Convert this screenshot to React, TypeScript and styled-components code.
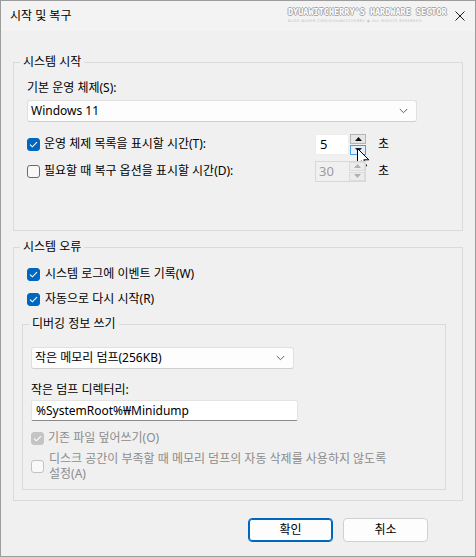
import React from "react";
import styled, { createGlobalStyle } from "styled-components";

const GlobalStyle = createGlobalStyle`
  html, body { margin: 0; padding: 0; background: #f0f0f0; }
  body {
    font-family: "Noto Sans", "Noto Sans CJK KR", sans-serif;
    font-size: 12px;
    color: #000;
  }
  * { box-sizing: border-box; }
`;

const Window = styled.div`
  width: 476px;
  height: 557px;
  border: 1px solid #9c9c9c;
  background: #f0f0f0;
  display: flex;
  flex-direction: column;
  overflow: hidden;
`;

const TitleBar = styled.div`
  height: 30px;
  flex-shrink: 0;
  background: #f3f3f3;
  display: flex;
  align-items: center;
  padding: 0 10px 0 9px;
`;

const Title = styled.div`
  font-size: 12px;
  line-height: 16px;
  color: #000;
`;

const Watermark = styled.div`
  margin-left: auto;
  margin-right: 9px;
  width: 158px;
  display: flex;
  flex-direction: column;
  align-items: stretch;
  margin-top: -2px;
`;

const WatermarkMain = styled.div`
  font-family: "DejaVu Sans Mono", monospace;
  font-weight: bold;
  font-size: 8.5px;
  line-height: 9px;
  color: #ffffff;
  white-space: nowrap;
  text-shadow: 1px 0 0 #a9a9a9, -1px 0 0 #a9a9a9, 0 1px 0 #a9a9a9, 0 -1px 0 #a9a9a9;
`;

const WatermarkSub = styled.div`
  margin-top: 2px;
  font-family: "DejaVu Sans", sans-serif;
  font-size: 3.6px;
  line-height: 4px;
  letter-spacing: 0.45px;
  color: #bdbdbd;
  white-space: nowrap;
`;

const CloseIcon = styled.svg`
  width: 10px;
  height: 10px;
  flex-shrink: 0;
`;

const Body = styled.div`
  display: flex;
  flex-direction: column;
  padding: 0 12px;
`;

const Group = styled.fieldset<{ $top: number; $inset?: boolean }>`
  margin: ${(p) => p.$top}px ${(p) => (p.$inset ? "16px" : "0")} 0 0;
  padding: 0;
  min-width: 0;
  border: 1px solid #dadada;
`;

const Legend = styled.legend`
  padding: 0 3px;
  margin-left: 6px;
  line-height: 16px;
  font-size: 12px;
`;

const GroupContent = styled.div<{ $pad: string }>`
  display: flex;
  flex-direction: column;
  padding: ${(p) => p.$pad};
`;

const FieldLabel = styled.div<{ $top?: number }>`
  line-height: 16px;
  margin-top: ${(p) => p.$top ?? 0}px;
`;

const Select = styled.div<{ $width: number; $top: number }>`
  width: ${(p) => p.$width}px;
  height: 22px;
  margin-top: ${(p) => p.$top}px;
  background: #fdfdfd;
  border: 1px solid #e0e0e0;
  border-bottom-color: #cfcfcf;
  border-radius: 3px;
  display: flex;
  align-items: center;
  justify-content: space-between;
  padding: 0 8px 0 3px;
  line-height: 16px;
`;

const Chevron = styled.svg`
  width: 9px;
  height: 6px;
`;

const TextInput = styled.div<{ $width: number; $top: number }>`
  width: ${(p) => p.$width}px;
  height: 21px;
  margin-top: ${(p) => p.$top}px;
  background: #ffffff;
  border: 1px solid #e3e3e3;
  border-bottom-color: #8a8a8a;
  border-radius: 2px;
  display: flex;
  align-items: center;
  padding: 0 4px;
  line-height: 16px;
`;

const SpinRow = styled.div<{ $top: number }>`
  display: grid;
  grid-template-columns: 288px 51px auto;
  align-items: center;
  height: 22px;
  margin-top: ${(p) => p.$top}px;
`;

const CheckRow = styled.label<{ $top?: number; $disabled?: boolean; $indent?: number }>`
  display: flex;
  align-items: center;
  gap: ${(p) => (p.$indent ? 5 : 4)}px;
  margin-top: ${(p) => p.$top ?? 0}px;
  padding-left: ${(p) => p.$indent ?? 0}px;
  line-height: 16px;
  color: ${(p) => (p.$disabled ? "#8c8c8c" : "#000")};
`;

const WrapText = styled.span`
  line-height: 15px;
  width: 350px;
  margin-left: 1px;
`;

const Box = styled.span<{ $checked: boolean; $disabled?: boolean }>`
  width: 13px;
  height: 13px;
  flex-shrink: 0;
  border-radius: 3px;
  display: flex;
  align-items: center;
  justify-content: center;
  background: ${(p) =>
    p.$checked ? (p.$disabled ? "#c4c4c4" : "#0067c0") : p.$disabled ? "#f9f9f9" : "#f8f8f8"};
  border: 1px solid
    ${(p) =>
      p.$checked ? (p.$disabled ? "#c4c4c4" : "#0067c0") : p.$disabled ? "#c2c2c2" : "#6b6b6b"};
`;

const Spin = styled.div<{ $disabled?: boolean }>`
  position: relative;
  width: 51px;
  height: 21px;
  display: flex;
  gap: 1px;
  background: ${(p) => (p.$disabled ? "#f0f0f0" : "transparent")};
  border: ${(p) => (p.$disabled ? "1px solid #d8d8d8" : "none")};
`;

const SpinValue = styled.div<{ $disabled?: boolean }>`
  flex: 1;
  display: flex;
  align-items: center;
  padding-left: ${(p) => (p.$disabled ? 3 : 4)}px;
  background: ${(p) => (p.$disabled ? "transparent" : "#ffffff")};
  border: ${(p) => (p.$disabled ? "none" : "1px solid #ededed")};
  color: ${(p) => (p.$disabled ? "#9c9c9c" : "#000")};
  font-size: 13px;
`;

const SpinButtons = styled.div`
  width: 16px;
  display: flex;
  flex-direction: column;
  gap: 1px;
`;

const SpinButton = styled.div<{ $state: "normal" | "hover" | "disabled" }>`
  flex: 1;
  display: flex;
  align-items: center;
  justify-content: center;
  border: 1px solid
    ${(p) => (p.$state === "hover" ? "#4d9be0" : p.$state === "disabled" ? "#dcdcdc" : "#b4b4b4")};
  background: ${(p) =>
    p.$state === "hover" ? "#e3f0fb" : p.$state === "disabled" ? "#ececec" : "#e6e6e6"};
`;

const Cursor = styled.svg`
  position: absolute;
  left: 42px;
  top: 14px;
  width: 13px;
  height: 20px;
  overflow: visible;
`;

const Unit = styled.span`
  line-height: 16px;
  margin-left: 12px;
`;

const Footer = styled.div`
  display: flex;
  justify-content: flex-end;
  gap: 10px;
  margin-top: 17px;
  padding-right: 35px;
`;

const Button = styled.div<{ $primary?: boolean }>`
  width: 85px;
  height: 24px;
  display: flex;
  align-items: center;
  justify-content: center;
  background: #fdfdfd;
  border: 1px solid ${(p) => (p.$primary ? "#0067c0" : "#d0d0d0")};
  box-shadow: ${(p) => (p.$primary ? "inset 0 0 0 1px #0067c0" : "none")};
  border-radius: 4px;
  line-height: 16px;
`;

const Check = ({ color = "#fff" }: { color?: string }) => (
  <svg width="9" height="7" viewBox="0 0 9 7">
    <path d="M1 3.6 L3.4 5.8 L8 1.2" fill="none" stroke={color} strokeWidth="1.1" />
  </svg>
);

const Tri = ({ up, color }: { up: boolean; color: string }) => (
  <svg width="7" height="4" viewBox="0 0 7 4">
    <path d={up ? "M0 4 L3.5 0 L7 4 Z" : "M0 0 L7 0 L3.5 4 Z"} fill={color} />
  </svg>
);

const Arrow = () => (
  <Chevron viewBox="0 0 9 6">
    <path d="M0.8 1 L4.5 4.7 L8.2 1" fill="none" stroke="#5f5f5f" strokeWidth="1" />
  </Chevron>
);

export default function App() {
  return (
    <>
      <GlobalStyle />
      <Window>
        <TitleBar>
          <Title>시작 및 복구</Title>
          <Watermark>
            <WatermarkMain>DYUAWITCHERRY'S HARDWARE SECTOR</WatermarkMain>
            <WatermarkSub>BLOG.NAVER.COM/DYUAWITCHERRY ◉ ALL RIGHTS RESERVED.</WatermarkSub>
          </Watermark>
          <CloseIcon viewBox="0 0 10 10">
            <path d="M0.5 0.5 L9.5 9.5 M9.5 0.5 L0.5 9.5" stroke="#1a1a1a" strokeWidth="1" />
          </CloseIcon>
        </TitleBar>
        <Body>
          <Group $top={23}>
            <Legend>시스템 시작</Legend>
            <GroupContent $pad="10px 0 48px 13px">
              <FieldLabel>기본 운영 체제(S):</FieldLabel>
              <Select $width={390} $top={4}>
                <span>Windows 11</span>
                <Arrow />
              </Select>
              <SpinRow $top={11}>
                <CheckRow>
                  <Box $checked>
                    <Check />
                  </Box>
                  운영 체제 목록을 표시할 시간(T):
                </CheckRow>
                <Spin>
                  <SpinValue>5</SpinValue>
                  <SpinButtons>
                    <SpinButton $state="normal">
                      <Tri up color="#111" />
                    </SpinButton>
                    <SpinButton $state="hover">
                      <Tri up={false} color="#222" />
                    </SpinButton>
                  </SpinButtons>
                  <Cursor viewBox="0 0 13 20">
                    <path
                      d="M0.5 0.5 L0.5 16.5 L4.3 12.8 L7.2 19 L9.6 17.9 L6.8 11.8 L11.8 11.8 Z"
                      fill="#fff"
                      stroke="#000"
                      strokeWidth="1"
                      strokeLinejoin="round"
                    />
                  </Cursor>
                </Spin>
                <Unit>초</Unit>
              </SpinRow>
              <SpinRow $top={5}>
                <CheckRow>
                  <Box $checked={false} />
                  필요할 때 복구 옵션을 표시할 시간(D):
                </CheckRow>
                <Spin $disabled>
                  <SpinValue $disabled>30</SpinValue>
                  <SpinButtons>
                    <SpinButton $state="disabled">
                      <Tri up color="#b0b0b0" />
                    </SpinButton>
                    <SpinButton $state="disabled">
                      <Tri up={false} color="#b0b0b0" />
                    </SpinButton>
                  </SpinButtons>
                </Spin>
                <Unit>초</Unit>
              </SpinRow>
            </GroupContent>
          </Group>

          <Group $top={8}>
            <Legend>시스템 오류</Legend>
            <GroupContent $pad="11px 0 10px 8px">
              <CheckRow $indent={5}>
                <Box $checked>
                  <Check />
                </Box>
                시스템 로그에 이벤트 기록(W)
              </CheckRow>
              <CheckRow $indent={5} $top={9}>
                <Box $checked>
                  <Check />
                </Box>
                자동으로 다시 시작(R)
              </CheckRow>
              <Group $top={9} $inset>
                <Legend>디버깅 정보 쓰기</Legend>
                <GroupContent $pad="15px 0 8px 8px">
                  <Select $width={263} $top={0}>
                    <span>작은 메모리 덤프(256KB)</span>
                    <Arrow />
                  </Select>
                  <FieldLabel $top={13}>작은 덤프 디렉터리:</FieldLabel>
                  <TextInput $width={267} $top={2}>
                    %SystemRoot%₩Minidump
                  </TextInput>
                  <CheckRow $top={9} $disabled>
                    <Box $checked $disabled>
                      <Check />
                    </Box>
                    기존 파일 덮어쓰기(O)
                  </CheckRow>
                  <CheckRow $top={5} $disabled>
                    <Box $checked={false} $disabled />
                    <WrapText>
                      디스크 공간이 부족할 때 메모리 덤프의 자동 삭제를 사용하지 않도록 설정(A)
                    </WrapText>
                  </CheckRow>
                </GroupContent>
              </Group>
            </GroupContent>
          </Group>

          <Footer>
            <Button $primary>확인</Button>
            <Button>취소</Button>
          </Footer>
        </Body>
      </Window>
    </>
  );
}
